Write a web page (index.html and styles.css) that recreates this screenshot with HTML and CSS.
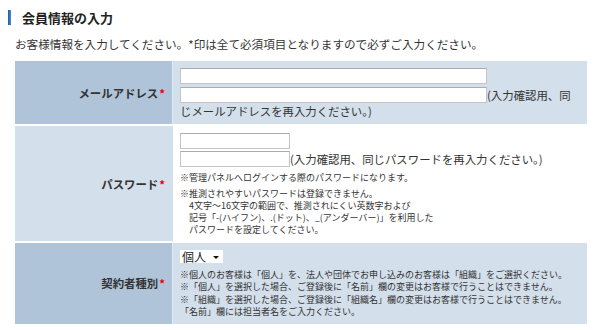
FILE: index.html
```html
<!DOCTYPE html>
<html>
	<head>
		<meta charset="utf-8">
		<title>会員情報の入力</title>
		<link rel="stylesheet" href="styles.css">
	</head>
	<body>
		<div class="page">
			<h2 class="ttl">会員情報の入力</h2>
			<p class="lead">お客様情報を入力してください。*印は全て必須項目となりますので必ずご入力ください。</p>
			<table class="form">
				<tr class="dark">
					<th>メールアドレス<span class="req">*</span></th>
					<td class="mail">
						<input type="text" class="long first"><input type="text" class="long">(入力確認用、同じメールアドレスを再入力ください。)
					</td>
				</tr>
				<tr class="light">
					<th>パスワード<span class="req">*</span></th>
					<td class="pass">
						<input type="password" class="short first"><input type="password" class="short">(入力確認用、同じパスワードを再入力ください。)
						<p class="note n1">※管理パネルへログインする際のパスワードになります。</p>
						<p class="note n2 hang">※推測されやすいパスワードは登録できません。<br>4文字～16文字の範囲で、推測されにくい英数字および<br>記号「-(ハイフン)、.(ドット)、_(アンダーバー)」を利用した<br>パスワードを設定してください。</p>
					</td>
				</tr>
				<tr class="dark">
					<th>契約者種別<span class="req">*</span></th>
					<td class="kind">
						<span class="sel"><select>
							<option>個人</option>
							<option>組織</option>
						</select></span>
						<p class="note n3">※個人のお客様は「個人」を、法人や団体でお申し込みのお客様は「組織」をご選択ください。<br>※「個人」を選択した場合、ご登録後に「名前」欄の変更はお客様で行うことはできません。<br>※「組織」を選択した場合、ご登録後に「組織名」欄の変更はお客様で行うことはできません。<br>「名前」欄には担当者名をご入力ください。</p>
					</td>
				</tr>
			</table>
		</div>
	</body>
</html>
```

FILE: styles.css
```css
*{margin: 0;padding: 0;box-sizing: border-box;}
body{
	background: #fff;
	color: #333;
	font-family: "Noto Sans CJK JP", "Noto Sans", sans-serif;
	font-size: 11.4px;
}
.page{
	padding: 10px 13px 0 15px;
}
.ttl{
	display: flex;
	align-items: center;
	margin-left: -7px;
	height: 15px;
	line-height: 15px;
	font-size: 13px;
	font-weight: bold;
	color: #222;
}
.ttl::before{
	content: "";
	width: 3px;
	height: 15px;
	margin-right: 11px;
	background: linear-gradient(to right, #1a5ba4, #4b8fd0);
}
.lead{
	margin-top: 11px;
	line-height: 16px;
	height: 16px;
	font-size: 11.6px;
}
.form{
	margin-top: 9px;
	width: 572px;
	border-collapse: separate;
	border-spacing: 0;
}
.form th{
	width: 157px;
	padding-right: 7px;
	text-align: right;
	vertical-align: middle;
	font-size: 11.4px;
	font-weight: bold;
	color: #333;
	border-bottom: 2px solid #fff;
}
.form td{
	padding: 7px 7px 5px 7px;
	line-height: 16px;
	vertical-align: top;
	border-left: 1px solid #e3eaf2;
	border-bottom: 2px solid #fff;
}
.form tr:last-child th,
.form tr:last-child td{border-bottom: none;}
.dark th{background: #afc4d9;}
.dark td{background: #d3dfeb;}
.light th{background: #d3dfeb;}
.light td{background: #fff;border-left-color: #d3dfeb;}
.req{
	color: #e60012;
	margin-left: 1px;
}
.form input{
	height: 16px;
	border: 1px solid #c4c4c4;
	border-top-color: #ababab;
	background: #fff;
	vertical-align: top;
	font-size: 11px;
}
.form input.first{
	display: block;
	margin-bottom: 3px;
}
.long{width: 307px;}
.short{width: 110px;}
.pass{padding: 6px 7px 5px 7px;}
.pass input.first{margin-bottom: 2px;}
.note{
	font-size: 9px;
	line-height: 12px;
}
.n1{margin-top: 5px;}
.n2{margin-top: 4px;}
.hang{
	padding-left: 1em;
	text-indent: -1em;
}
.kind{padding-top: 7px;}
.sel{
	display: inline-block;
	position: relative;
	height: 13px;
	vertical-align: top;
}
.sel select{
	appearance: none;
	-webkit-appearance: none;
	display: block;
	width: 43px;
	height: 13px;
	padding: 0 0 0 2px;
	border: none;
	background: #fff;
	color: #222;
	font-family: "Noto Sans CJK JP", sans-serif;
	font-size: 12px;
	line-height: 13px;
}
.sel::after{
	content: "";
	position: absolute;
	right: 4px;
	top: 6px;
	border-left: 3px solid transparent;
	border-right: 3px solid transparent;
	border-top: 3px solid #111;
}
.n3{
	margin-top: 3px;
	line-height: 12.4px;
}
```
